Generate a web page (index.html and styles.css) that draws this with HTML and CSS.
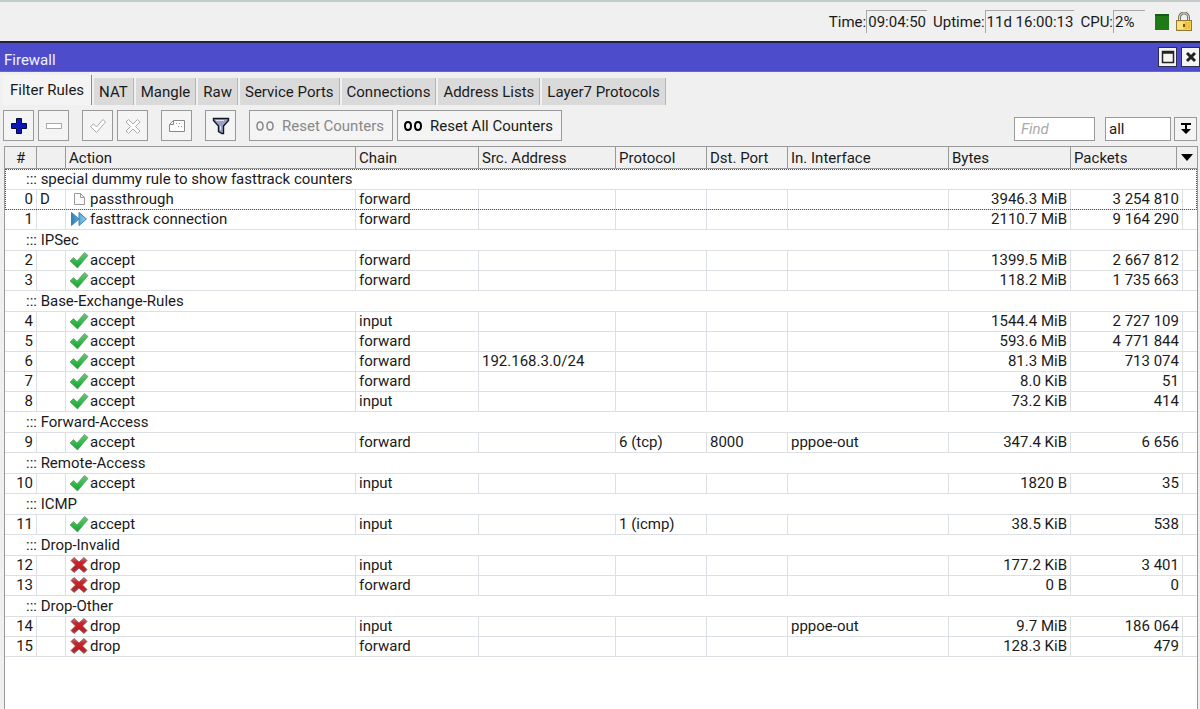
FILE: index.html
```html
<!DOCTYPE html>
<html lang="en">
<head>
    <meta charset="UTF-8">
    <meta name="viewport" content="width=device-width, initial-scale=1.0">
    <title>Firewall</title>
    <link rel="stylesheet" href="styles.css">
</head>
<body>
    <!-- Icons used by the rule list -->
    <svg class="sprite" aria-hidden="true">
        <defs>
            <linearGradient id="green" x1="0" y1="0" x2="0" y2="1">
                <stop offset="0" stop-color="#7fb98a"/>
                <stop offset="0.45" stop-color="#35c04c"/>
                <stop offset="1" stop-color="#1f9a38"/>
            </linearGradient>
            <linearGradient id="red" x1="0" y1="0" x2="0" y2="1">
                <stop offset="0" stop-color="#bd7a7d"/>
                <stop offset="0.3" stop-color="#c8262c"/>
                <stop offset="0.7" stop-color="#c01c22"/>
                <stop offset="1" stop-color="#8c4a4d"/>
            </linearGradient>
            <linearGradient id="blue" x1="0" y1="0" x2="1" y2="0">
                <stop offset="0" stop-color="#2f7fb8"/>
                <stop offset="1" stop-color="#8fd0f2"/>
            </linearGradient>
        </defs>
        <symbol id="accept" viewBox="0 0 20 18">
            <path d="M1 10L4.500 6.500L8 10L15.500 1.500L19 4.500L8.500 17Z" fill="url(#green)" stroke="#5f9f6c" stroke-width="0.8"/>
        </symbol>
        <symbol id="drop" viewBox="0 0 20 18">
            <path d="M5 1.500L10 6L15 1.500L18 4.500L13.500 9L18 13.500L15 16.500L10 12L5 16.500L2 13.500L6.500 9L2 4.500Z" fill="url(#red)" stroke="#8e4549" stroke-width="0.8"/>
        </symbol>
        <symbol id="fasttrack" viewBox="0 0 20 18">
            <path d="M2.500 2.500L10 9L2.500 15.500Z M10 2.500L17.500 9L10 15.500Z" fill="url(#blue)" stroke="#3b84b4"/>
        </symbol>
        <symbol id="passthrough" viewBox="0 0 20 18">
            <path d="M5.500 3.500H11.500L15.500 7.500V14.500H5.500Z M11.500 3.500V7.500H15.500" fill="#fafafa" stroke="#999"/>
        </symbol>
    </svg>

    <header class="status-bar">
        <div class="status"><span>Time:</span><output>09:04:50</output></div>
        <div class="status"><span>Uptime:</span><output>11d 16:00:13</output></div>
        <div class="status cpu"><span>CPU:</span><output>2%</output></div>
        <span class="cpu-graph"></span>
        <svg class="lock" width="18" height="20" viewBox="0 0 18 20">
            <path d="M4.500 9V5.500A4.500 4.500 0 0 1 13.500 5.500V9" fill="none" stroke="#77776c" stroke-width="3"/>
            <path d="M4.500 9V5.500A4.500 4.500 0 0 1 13.500 5.500V9" fill="none" stroke="#e4e4dc"/>
            <rect x="1.500" y="8.500" width="15" height="10" fill="#f3d34b" stroke="#94793a"/>
            <path d="M3 10V17M5 10V17M7 10V17" stroke="#fff3a8"/>
            <path d="M11 10V17M14 10V17" stroke="#dda92e"/>
            <path d="M9 12V15" stroke="#6f5518" stroke-width="2"/>
        </svg>
    </header>

    <main class="window">
        <div class="title-bar">
            <h1>Firewall</h1>
            <button class="window-btn" type="button" aria-label="Maximize">
                <svg width="14" height="14" viewBox="0 0 14 14"><path d="M1.500 1.500H12.500V12.500H1.500ZM1 3H13" fill="none" stroke="#222" stroke-width="1.500"/></svg>
            </button>
            <button class="window-btn" type="button" aria-label="Close">
                <svg width="14" height="14" viewBox="0 0 14 14"><path d="M3 3L11 11M11 3L3 11" stroke="#222" stroke-width="3"/></svg>
            </button>
        </div>

        <nav class="tabs">
            <a class="tab active" href="#filter">Filter Rules</a>
            <a class="tab" href="#nat">NAT</a>
            <a class="tab" href="#mangle">Mangle</a>
            <a class="tab" href="#raw">Raw</a>
            <a class="tab" href="#service-ports">Service Ports</a>
            <a class="tab" href="#connections">Connections</a>
            <a class="tab" href="#address-lists">Address Lists</a>
            <a class="tab" href="#layer7">Layer7 Protocols</a>
        </nav>

        <div class="toolbar">
            <div class="tool-group">
                <button class="tool" type="button" aria-label="Add">
                    <svg width="20" height="20" viewBox="0 0 20 20"><path d="M7.500 2.500H12.500V7.500H17.500V12.500H12.500V17.500H7.500V12.500H2.500V7.500H7.500Z" fill="#0d15b8" stroke="#05083c"/></svg>
                </button>
                <button class="tool" type="button" aria-label="Remove" disabled>
                    <svg width="20" height="20" viewBox="0 0 20 20"><rect x="2.500" y="7.500" width="15" height="5" fill="#fff" stroke="#aaa"/></svg>
                </button>
            </div>
            <div class="tool-group">
                <button class="tool" type="button" aria-label="Enable" disabled>
                    <svg width="20" height="20" viewBox="0 0 20 20"><path d="M2.500 10.500L5.500 8L8.500 11L15 3.500L17.500 6L8.500 16.500Z" fill="#fff" stroke="#aaa"/></svg>
                </button>
                <button class="tool" type="button" aria-label="Disable" disabled>
                    <svg width="20" height="20" viewBox="0 0 20 20"><path d="M5.500 3.500L10 8L14.500 3.500L17 6L12.500 10.500L17 15L14.500 17.500L10 13L5.500 17.500L3 15L7.500 10.500L3 6Z" fill="#fff" stroke="#aaa"/></svg>
                </button>
            </div>
            <div class="tool-group">
                <button class="tool" type="button" aria-label="Comment">
                    <svg width="20" height="20" viewBox="0 0 20 20"><path d="M6.500 4.500H17.500V15.500H2.500V8.500Z M6.500 4.500V8.500H2.500" fill="#fff" stroke="#888"/><path d="M9 7.500H15M11 10.500H16" stroke="#999" stroke-dasharray="1 2"/></svg>
                </button>
            </div>
            <div class="tool-group">
                <button class="tool" type="button" aria-label="Filter">
                    <svg width="20" height="20" viewBox="0 0 20 20"><path d="M2.500 2.500H17.500V4.500L12.500 10V17.500H11L7.500 15.500V10L2.500 4.500Z" fill="#9aa2c4" stroke="#151528" stroke-width="1.400"/><path d="M5 4.500H13M9.500 10V14" stroke="#dfe3f4"/></svg>
                </button>
            </div>
            <div class="tool-group">
                <button class="tool wide" type="button" disabled>
                    <svg width="18" height="10" viewBox="0 0 18 10"><path d="M4 1C6 1 7 2.500 7 5S6 9 4 9S1 7.500 1 5S2 1 4 1ZM14 1C16 1 17 2.500 17 5S16 9 14 9S11 7.500 11 5S12 1 14 1Z" fill="none" stroke="#888" stroke-width="1.500"/></svg>
                    Reset Counters
                </button>
                <button class="tool wide" type="button">
                    <svg width="18" height="10" viewBox="0 0 18 10"><path d="M4 1C6 1 7 2.500 7 5S6 9 4 9S1 7.500 1 5S2 1 4 1ZM14 1C16 1 17 2.500 17 5S16 9 14 9S11 7.500 11 5S12 1 14 1Z" fill="none" stroke="#000" stroke-width="2"/></svg>
                    Reset All Counters
                </button>
            </div>
            <div class="search">
                <input class="find" type="text" placeholder="Find" aria-label="Find">
                <select class="chain" aria-label="Chain">
                    <option>all</option>
                    <option>forward</option>
                    <option>input</option>
                </select>
                <button class="chain-btn" type="button" aria-label="Open chain list">
                    <svg width="12" height="14" viewBox="0 0 12 14"><path d="M1 1H11V3H1ZM5 3H7V7H11L6 12L1 7H5Z" fill="#000"/></svg>
                </button>
            </div>
        </div>

        <div class="list">
            <table class="rules">
                <colgroup>
                    <col class="c-num"><col class="c-flag"><col class="c-action"><col class="c-chain"><col class="c-src">
                    <col class="c-proto"><col class="c-port"><col class="c-in"><col class="c-bytes"><col class="c-packets"><col class="c-end">
                </colgroup>
                <thead>
                    <tr>
                        <th class="center">#</th><th></th><th>Action</th><th>Chain</th><th>Src. Address</th><th>Protocol</th><th>Dst. Port</th><th>In. Interface</th><th>Bytes</th><th colspan="2">Packets</th>
                    </tr>
                </thead>
                <tbody class="selected">
                    <tr class="comment"><td colspan="11"><i>:::</i> special dummy rule to show fasttrack counters</td></tr>
                    <tr><td>0</td><td>D</td><td><svg><use href="#passthrough"/></svg>passthrough</td><td>forward</td><td></td><td></td><td></td><td></td><td>3946.3 MiB</td><td>3 254 810</td><td></td></tr>
                </tbody>
                <tbody>
                    <tr><td>1</td><td></td><td><svg><use href="#fasttrack"/></svg>fasttrack connection</td><td>forward</td><td></td><td></td><td></td><td></td><td>2110.7 MiB</td><td>9 164 290</td><td></td></tr>
                </tbody>
                <tbody>
                    <tr class="comment"><td colspan="11"><i>:::</i> IPSec</td></tr>
                    <tr><td>2</td><td></td><td><svg><use href="#accept"/></svg>accept</td><td>forward</td><td></td><td></td><td></td><td></td><td>1399.5 MiB</td><td>2 667 812</td><td></td></tr>
                    <tr><td>3</td><td></td><td><svg><use href="#accept"/></svg>accept</td><td>forward</td><td></td><td></td><td></td><td></td><td>118.2 MiB</td><td>1 735 663</td><td></td></tr>
                </tbody>
                <tbody>
                    <tr class="comment"><td colspan="11"><i>:::</i> Base-Exchange-Rules</td></tr>
                    <tr><td>4</td><td></td><td><svg><use href="#accept"/></svg>accept</td><td>input</td><td></td><td></td><td></td><td></td><td>1544.4 MiB</td><td>2 727 109</td><td></td></tr>
                    <tr><td>5</td><td></td><td><svg><use href="#accept"/></svg>accept</td><td>forward</td><td></td><td></td><td></td><td></td><td>593.6 MiB</td><td>4 771 844</td><td></td></tr>
                    <tr><td>6</td><td></td><td><svg><use href="#accept"/></svg>accept</td><td>forward</td><td>192.168.3.0/24</td><td></td><td></td><td></td><td>81.3 MiB</td><td>713 074</td><td></td></tr>
                    <tr><td>7</td><td></td><td><svg><use href="#accept"/></svg>accept</td><td>forward</td><td></td><td></td><td></td><td></td><td>8.0 KiB</td><td>51</td><td></td></tr>
                    <tr><td>8</td><td></td><td><svg><use href="#accept"/></svg>accept</td><td>input</td><td></td><td></td><td></td><td></td><td>73.2 KiB</td><td>414</td><td></td></tr>
                </tbody>
                <tbody>
                    <tr class="comment"><td colspan="11"><i>:::</i> Forward-Access</td></tr>
                    <tr><td>9</td><td></td><td><svg><use href="#accept"/></svg>accept</td><td>forward</td><td></td><td>6 (tcp)</td><td>8000</td><td>pppoe-out</td><td>347.4 KiB</td><td>6 656</td><td></td></tr>
                </tbody>
                <tbody>
                    <tr class="comment"><td colspan="11"><i>:::</i> Remote-Access</td></tr>
                    <tr><td>10</td><td></td><td><svg><use href="#accept"/></svg>accept</td><td>input</td><td></td><td></td><td></td><td></td><td>1820 B</td><td>35</td><td></td></tr>
                </tbody>
                <tbody>
                    <tr class="comment"><td colspan="11"><i>:::</i> ICMP</td></tr>
                    <tr><td>11</td><td></td><td><svg><use href="#accept"/></svg>accept</td><td>input</td><td></td><td>1 (icmp)</td><td></td><td></td><td>38.5 KiB</td><td>538</td><td></td></tr>
                </tbody>
                <tbody>
                    <tr class="comment"><td colspan="11"><i>:::</i> Drop-Invalid</td></tr>
                    <tr><td>12</td><td></td><td><svg><use href="#drop"/></svg>drop</td><td>input</td><td></td><td></td><td></td><td></td><td>177.2 KiB</td><td>3 401</td><td></td></tr>
                    <tr><td>13</td><td></td><td><svg><use href="#drop"/></svg>drop</td><td>forward</td><td></td><td></td><td></td><td></td><td>0 B</td><td>0</td><td></td></tr>
                </tbody>
                <tbody>
                    <tr class="comment"><td colspan="11"><i>:::</i> Drop-Other</td></tr>
                    <tr><td>14</td><td></td><td><svg><use href="#drop"/></svg>drop</td><td>input</td><td></td><td></td><td></td><td>pppoe-out</td><td>9.7 MiB</td><td>186 064</td><td></td></tr>
                    <tr><td>15</td><td></td><td><svg><use href="#drop"/></svg>drop</td><td>forward</td><td></td><td></td><td></td><td></td><td>128.3 KiB</td><td>479</td><td></td></tr>
                </tbody>
            </table>
            <button class="columns-btn" type="button" aria-label="Show columns">
                <svg width="14" height="8" viewBox="0 0 14 8"><path d="M1 0H13L7 7Z" fill="#000"/></svg>
            </button>
        </div>
    </main>
</body>
</html>
```
FILE: styles.css
```css
/* Basic Styles */
* {
    box-sizing: border-box;
}

body {
    margin: 0;
    min-height: 100vh;
    display: flex;
    flex-direction: column;
    background: #f0f0f0;
    color: #1a1a1a;
    font-family: Roboto, "Liberation Sans", Arial, sans-serif;
    font-size: 15px;
    line-height: 20px;
}

button, input, select {
    font: inherit;
    color: inherit;
    margin: 0;
    padding: 0;
    border-radius: 0;
}

button {
    display: flex;
    align-items: center;
    justify-content: center;
}

.sprite {
    position: absolute;
    width: 0;
    height: 0;
}

/* Status Bar */
.status-bar {
    display: flex;
    align-items: center;
    justify-content: flex-end;
    gap: 6px;
    height: 43px;
    padding-right: 7px;
    border-top: 2px solid #c4cbcb;
    border-bottom: 2px solid #22223c;
}

.status {
    display: flex;
    align-items: center;
}

.status output {
    height: 23px;
    padding: 0 1px;
    border-top: 1px solid #a8a8a8;
    border-left: 1px solid #a8a8a8;
    line-height: 22px;
}

.cpu output {
    width: 32px;
}

.cpu-graph {
    width: 14px;
    height: 16px;
    margin-left: 4px;
    background: #1f7a16;
    border-top: 2px solid #155c10;
}

/* Window */
.window {
    flex: 1;
    display: flex;
    flex-direction: column;
}

.title-bar {
    display: flex;
    align-items: center;
    gap: 4px;
    height: 29px;
    padding-left: 4px;
    background: #4d4dcb;
    border-bottom: 1px solid #6a6aa8;
    color: #f2f2ff;
}

.title-bar h1 {
    flex: 1;
    margin: 0;
    padding-top: 5px;
    font-size: 15px;
    font-weight: normal;
}

.window-btn {
    width: 19px;
    height: 20px;
    background: #f4f4f4;
    border: 1px solid #2b2b55;
}

/* Tabs */
.tabs {
    display: flex;
    align-items: flex-end;
    height: 33px;
    padding-left: 3px;
    gap: 2px;
}

.tab {
    height: 27px;
    padding: 4px 5px;
    background: #dadada;
    border-right: 1px solid #b4b4b4;
    color: inherit;
    text-decoration: none;
    white-space: nowrap;
}

.tab.active {
    height: 30px;
    padding: 5px 7px;
    background: #f4f4f4;
    border-right-color: #8a8a8a;
}

/* Toolbar */
.toolbar {
    display: flex;
    align-items: center;
    gap: 13px;
    height: 41px;
    padding: 0 3px;
}

.tool-group {
    display: flex;
    gap: 4px;
}

.tool {
    width: 31px;
    height: 31px;
    background: #f4f4f4;
    border: 1px solid #999;
}

.tool:disabled {
    color: #888;
}

.tool.wide {
    width: auto;
    gap: 8px;
    padding: 0 8px 0 6px;
    white-space: nowrap;
}

.search {
    display: flex;
    gap: 3px;
    margin-left: auto;
    padding-top: 6px;
}

.find, .chain, .chain-btn {
    height: 24px;
    background: #fff;
    border: 1px solid #999;
}

.find {
    width: 81px;
    margin-right: 7px;
    padding: 0 6px;
}

.find::placeholder {
    color: #aaa;
    font-style: italic;
}

.chain {
    width: 66px;
    padding: 0 3px;
    appearance: none;
}

.chain-btn {
    width: 23px;
    background: #f4f4f4;
}

/* Rule List */
.list {
    position: relative;
    flex: 1;
    margin: 0 2px 0 4px;
    background: #fff;
    border: 1px solid #999;
    border-bottom: none;
}

.rules {
    width: 100%;
    table-layout: fixed;
    border-collapse: separate;
    border-spacing: 0;
}

.c-num { width: 32px; }
.c-flag { width: 29px; }
.c-chain { width: 123px; }
.c-src { width: 137px; }
.c-proto { width: 91px; }
.c-port { width: 81px; }
.c-in { width: 161px; }
.c-bytes { width: 122px; }
.c-packets { width: 112px; }
.c-end { width: 14px; }

.rules th {
    height: 22px;
    padding: 0 3px;
    background: #f0f0f0;
    border-right: 1px solid #999;
    border-bottom: 1px solid #999;
    font-weight: normal;
    text-align: left;
}

.rules th.center {
    text-align: center;
}

.rules td {
    height: 20px;
    padding: 0 3px;
    border-right: 1px solid #dcdfe3;
    border-bottom: 1px solid #dcdfe3;
    line-height: 19px;
    white-space: nowrap;
}

.rules td:last-child {
    border-right: none;
}

.rules td:first-child,
.rules td:nth-child(9),
.rules td:nth-child(10) {
    text-align: right;
}

.rules .comment td {
    height: 21px;
    padding-left: 21px;
    line-height: 20px;
    text-align: left;
}

.comment i {
    font-style: normal;
}

.rules td svg {
    width: 20px;
    height: 18px;
    margin-right: 1px;
    vertical-align: top;
}

.selected {
    outline: 1px dotted #555;
    outline-offset: -1px;
}

.columns-btn {
    position: absolute;
    top: 0;
    right: 0;
    width: 21px;
    height: 22px;
    background: #f0f0f0;
    border: solid #999;
    border-width: 0 0 1px 1px;
}
```
